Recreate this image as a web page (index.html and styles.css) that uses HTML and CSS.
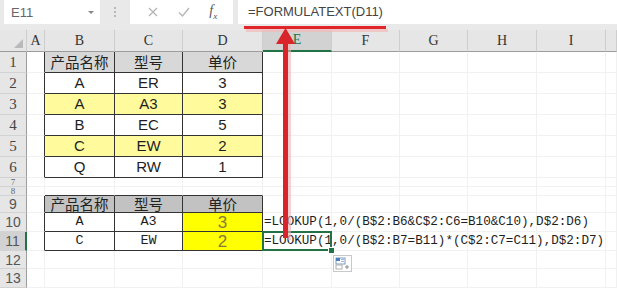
FILE: index.html
```html
<!DOCTYPE html>
<html lang="zh-CN">
<head>
    <meta charset="UTF-8">
    <meta name="viewport" content="width=device-width, initial-scale=1.0">
    <title>FORMULATEXT</title>
    <link rel="stylesheet" href="styles.css">
</head>
<body>
<div class="app">
    <div class="formula-bar">
        <div class="name-box">
            <span class="cell-ref">E11</span>
            <span class="caret"></span>
        </div>
        <div class="grip"><i></i><i></i><i></i></div>
        <div class="fx-tools">
            <svg class="tool-icon" width="10" height="10" viewBox="0 0 10 10"><path d="M1 1L9 9M9 1L1 9" stroke="#b5b5b5" stroke-width="1.3" fill="none"/></svg>
            <svg class="tool-icon" width="12" height="10" viewBox="0 0 12 10"><path d="M1 5.5L4.5 9L11 1" stroke="#b5b5b5" stroke-width="1.3" fill="none"/></svg>
            <span class="fx">f<sub>x</sub></span>
        </div>
        <div class="formula-input">=FORMULATEXT(D11)</div>
    </div>

    <table class="sheet">
        <colgroup>
            <col class="c-rh"><col class="c-a"><col class="c-b"><col class="c-c"><col class="c-d">
            <col class="c-e"><col class="c-f"><col class="c-g"><col class="c-h"><col class="c-i"><col class="c-j">
        </colgroup>
        <thead>
            <tr class="heads">
                <th class="corner"><svg width="9" height="9" viewBox="0 0 9 9"><polygon points="9,0 9,9 0,9" fill="#b9b9b9"/></svg></th>
                <th>A</th><th>B</th><th>C</th><th>D</th>
                <th class="col-active">E</th>
                <th>F</th><th>G</th><th>H</th><th>I</th><th></th>
            </tr>
        </thead>
        <tbody>
            <tr class="r-std">
                <th class="rh">1</th><td class="edge"></td>
                <td class="box hd1 zh">产品名称</td><td class="box hd1 zh">型号</td><td class="box hd1 zh">单价</td>
                <td></td><td></td><td></td><td></td><td></td><td></td>
            </tr>
            <tr class="r-std">
                <th class="rh">2</th><td class="edge"></td>
                <td class="box">A</td><td class="box">ER</td><td class="box">3</td>
                <td></td><td></td><td></td><td></td><td></td><td></td>
            </tr>
            <tr class="r-std">
                <th class="rh">3</th><td class="edge"></td>
                <td class="box pale">A</td><td class="box pale">A3</td><td class="box pale">3</td>
                <td></td><td></td><td></td><td></td><td></td><td></td>
            </tr>
            <tr class="r-std">
                <th class="rh">4</th><td class="edge"></td>
                <td class="box">B</td><td class="box">EC</td><td class="box">5</td>
                <td></td><td></td><td></td><td></td><td></td><td></td>
            </tr>
            <tr class="r-std">
                <th class="rh">5</th><td class="edge"></td>
                <td class="box pale">C</td><td class="box pale">EW</td><td class="box pale">2</td>
                <td></td><td></td><td></td><td></td><td></td><td></td>
            </tr>
            <tr class="r-std r-last">
                <th class="rh">6</th><td class="edge"></td>
                <td class="box">Q</td><td class="box">RW</td><td class="box">1</td>
                <td></td><td></td><td></td><td></td><td></td><td></td>
            </tr>
            <tr class="r-slim">
                <th class="rh tiny">7</th><td></td>
                <td></td><td></td><td></td>
                <td></td><td></td><td></td><td></td><td></td><td></td>
            </tr>
            <tr class="r-slim">
                <th class="rh tiny">8</th><td></td>
                <td class="cap"></td><td class="cap"></td><td class="cap"></td>
                <td></td><td></td><td></td><td></td><td></td><td></td>
            </tr>
            <tr class="r-9">
                <th class="rh low">9</th><td class="edge"></td>
                <td class="box hd2 zh">产品名称</td><td class="box hd2 zh">型号</td><td class="box hd2 zh">单价</td>
                <td></td><td></td><td></td><td></td><td></td><td></td>
            </tr>
            <tr class="r-19">
                <th class="rh low">10</th><td class="edge"></td>
                <td class="box mono">A</td><td class="box mono">A3</td><td class="box bright">3</td>
                <td class="formula">=LOOKUP(1,0/(B$2:B6&amp;C$2:C6=B10&amp;C10),D$2:D6)</td>
                <td></td><td></td><td></td><td></td><td></td>
            </tr>
            <tr class="r-19">
                <th class="rh low row-active">11</th><td class="edge"></td>
                <td class="box mono">C</td><td class="box mono">EW</td><td class="box bright">2</td>
                <td class="formula active">=LOOKUP(1,0/(B$2:B7=B11)*(C$2:C7=C11),D$2:D7)<span class="sel"></span><span class="handle"></span></td>
                <td></td><td></td><td></td><td></td><td></td>
            </tr>
            <tr class="r-18">
                <th class="rh low">12</th><td></td>
                <td></td><td></td><td></td>
                <td></td><td></td><td></td><td></td><td></td><td></td>
            </tr>
            <tr class="r-19">
                <th class="rh low">13</th><td></td>
                <td></td><td></td><td></td>
                <td></td><td></td><td></td><td></td><td></td><td></td>
            </tr>
        </tbody>
    </table>

    <!-- callout drawn over the sheet -->
    <svg class="callout" width="617" height="288" viewBox="0 0 617 288">
        <rect x="246" y="29" width="142" height="3" fill="#f3b9b9" opacity="0.7"/>
        <rect x="244" y="26" width="142" height="3" fill="#e0262a"/>
        <rect x="288" y="44" width="3" height="196" fill="#f0b0b0" opacity="0.6"/>
        <rect x="283" y="42" width="5" height="196" fill="#d9242b"/>
        <polygon points="285.5,28 276,44 295,44" fill="#d9242b"/>
    </svg>

    <div class="paste-opt">
        <svg width="15" height="13" viewBox="0 0 15 13">
            <rect x="1" y="1" width="9" height="6" fill="#ffffff" stroke="#7d9cc4"/>
            <rect x="1" y="1" width="4" height="3" fill="#4a7cc0"/>
            <path d="M6 2.5H9M6 4.5H9" stroke="#9cb4d4"/>
            <rect x="1" y="8" width="6" height="4" fill="none" stroke="#b0b0b0"/>
            <path d="M10 10H14M12 8V12" stroke="#8a8a8a"/>
        </svg>
    </div>
</div>
</body>
</html>
```

FILE: styles.css
```css
body {
    margin: 0;
    background-color: #fff;
    font-family: 'Liberation Sans', Arial, sans-serif;
}

.app {
    position: relative;
    width: 617px;
    height: 288px;
    overflow: hidden;
    background-color: #fff;
}

/* formula bar */
.formula-bar {
    display: flex;
    height: 30px;
    background-color: #e9e9e9;
}

.name-box {
    display: flex;
    align-items: center;
    justify-content: space-between;
    width: 96px;
    height: 24px;
    margin-left: 4px;
    padding: 0 6px 0 7px;
    box-sizing: border-box;
    background-color: #fff;
}

.cell-ref {
    font-size: 13px;
    color: #666;
}

.caret {
    width: 0;
    height: 0;
    border-left: 3px solid transparent;
    border-right: 3px solid transparent;
    border-top: 3px solid #888;
}

.grip {
    display: flex;
    flex-direction: column;
    align-items: center;
    justify-content: center;
    gap: 2px;
    width: 30px;
    height: 24px;
}

.grip i {
    width: 2px;
    height: 2px;
    background-color: #b8b8b8;
}

.fx-tools {
    display: flex;
    align-items: center;
    justify-content: space-around;
    width: 103px;
    height: 24px;
    padding: 0 6px 0 8px;
    box-sizing: border-box;
    background-color: #fff;
}

.fx {
    font-family: 'Liberation Serif', serif;
    font-style: italic;
    font-size: 14px;
    color: #555;
}

.fx sub {
    font-size: 9px;
}

.formula-input {
    flex: 1;
    height: 24px;
    margin-left: 5px;
    padding-left: 10px;
    background-color: #fff;
    font-size: 13px;
    line-height: 24px;
    color: #444;
}

/* grid */
.sheet {
    table-layout: fixed;
    width: 617px;
    border-collapse: separate;
    border-spacing: 0;
    font-size: 15px;
    color: #1e1e1e;
}

.c-rh { width: 27px; }
.c-a { width: 18px; }
.c-b { width: 70px; }
.c-c { width: 68px; }
.c-d { width: 80px; }
.c-e { width: 69px; }
.c-f { width: 68px; }
.c-g { width: 68px; }
.c-h { width: 69px; }
.c-i { width: 69px; }
.c-j { width: 11px; }

.sheet th,
.sheet td {
    padding: 0;
    line-height: 16px;
    text-align: center;
    white-space: nowrap;
}

.sheet td {
    border-right: 1px solid #f1f1f1;
    border-bottom: 1px solid #f1f1f1;
}

.heads {
    height: 22px;
}

.heads th {
    background-color: #e6e6e6;
    border-right: 1px solid #cecece;
    border-bottom: 1px solid #9c9c9c;
    font-family: 'Liberation Serif', serif;
    font-weight: normal;
    font-size: 14px;
    color: #333;
}

.heads .corner {
    text-align: right;
    vertical-align: bottom;
    padding: 0 3px 3px 0;
    line-height: 0;
}

.heads .col-active {
    background-color: #d2d2d2;
    border-bottom: 2px solid #217346;
    color: #217346;
}

.rh {
    background-color: #e6e6e6;
    border-right: 1px solid #9c9c9c;
    border-bottom: 1px solid #d2d2d2;
    font-family: 'Liberation Serif', serif;
    font-weight: normal;
    font-size: 15px;
    color: #444;
}

.sheet .rh.tiny {
    font-size: 9px;
    line-height: 8px;
    color: #666;
}

.rh.low {
    font-family: 'Liberation Sans', sans-serif;
    font-size: 14px;
    color: #555;
}

.rh.row-active {
    background-color: #d2d2d2;
    border-right: 2px solid #217346;
}

.r-std { height: 21px; }
.r-slim { height: 9px; }
.r-9 { height: 17px; }
.r-19 { height: 19px; }
.r-18 { height: 18px; }

/* data tables */
.sheet .edge {
    border-right: 1px solid #333;
}

.sheet .box {
    border-right: 1px solid #333;
    border-bottom: 1px solid #333;
}

.sheet .cap {
    border-bottom: 1px solid #333;
}

.zh {
    font-family: 'Noto Sans CJK SC', sans-serif;
    font-size: 14.5px;
    color: #222;
}

.hd1 {
    background-color: #d8d8d8;
}

.hd2 {
    background-color: #c2c2c2;
}

.pale {
    background-color: #fffb9c;
}

.mono {
    font-family: 'Liberation Mono', monospace;
    font-size: 13.5px;
}

.sheet .bright {
    background-color: #ffff00;
    font-size: 17px;
    line-height: 17px;
    color: #857a3a;
}

.sheet .formula {
    text-align: left;
    padding-left: 1px;
    font-family: 'Liberation Mono', monospace;
    font-size: 12.6px;
    color: #1e1e1e;
}

.active {
    position: relative;
}

.sel {
    position: absolute;
    top: -1px;
    left: -1px;
    right: -1px;
    bottom: -1px;
    border: 2px solid #217346;
}

.handle {
    position: absolute;
    right: -4px;
    bottom: -4px;
    width: 5px;
    height: 5px;
    background-color: #217346;
    border: 1px solid #fff;
}

/* overlays */
.callout {
    position: absolute;
    left: 0;
    top: 0;
    pointer-events: none;
}

.paste-opt {
    position: absolute;
    left: 333px;
    top: 255px;
    width: 17px;
    height: 15px;
    border: 1px solid #c8c8c8;
    background-color: #fff;
    display: flex;
    align-items: center;
    justify-content: center;
}
```
